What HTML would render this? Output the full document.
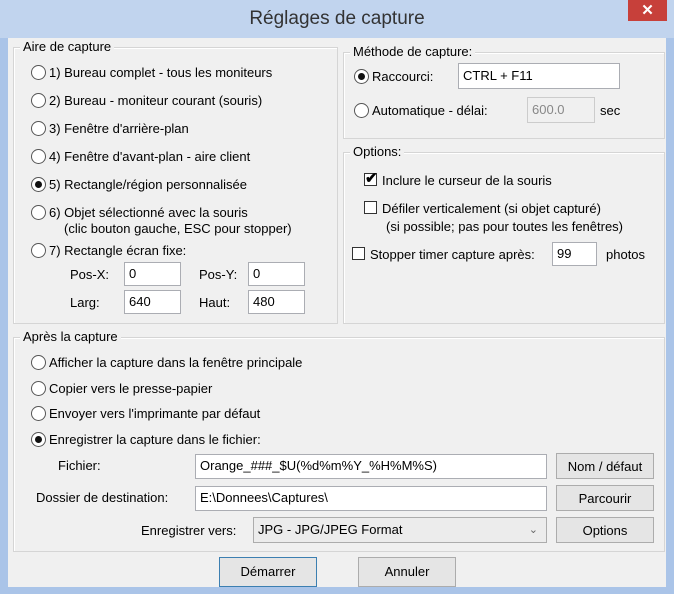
<!DOCTYPE html>
<html><head><meta charset="utf-8"><style>
body{margin:0;width:674px;height:594px;background:#aac4e8;font-family:"Liberation Sans",sans-serif;font-size:13px;color:#000;position:relative;overflow:hidden}
.a{position:absolute;white-space:nowrap}
#win{position:absolute;left:8px;top:38px;width:658px;height:549px;background:#f0f0f0}
#title{position:absolute;left:0;top:0;width:674px;height:38px;background:#c1d4ee;text-align:center;line-height:38px;font-size:19px;color:#333}
#close{position:absolute;left:628px;top:0;width:39px;height:21px;background:#c7403a;color:#fff;font-size:15px;text-align:center;line-height:21px;font-weight:bold}
.g{position:absolute;border:1px solid #d5d5d5;box-shadow:inset 1px 1px 0 #fff}
.gl{position:absolute;background:#f0f0f0;padding:0 3px;top:-9px;left:6px}
.r{position:absolute;width:15px;height:15px;margin:-1px 0 0 -1px;border:1px solid #555;border-radius:50%;background:#fff;box-sizing:border-box}
.r.on::after{content:"";position:absolute;left:3px;top:3px;width:7px;height:7px;border-radius:50%;background:#111}
.c{position:absolute;width:13px;height:13px;border:1px solid #333;background:#fff;box-sizing:border-box}
.i{position:absolute;background:#fff;border:1px solid #abadb3;box-sizing:border-box;padding-left:4px;line-height:22px}
.b{position:absolute;background:#e5e5e5;border:1px solid #acacac;box-sizing:border-box;text-align:center;line-height:26px}
</style></head><body>
<div id="title">Réglages de capture</div>
<div id="close">✕</div>
<div id="win"></div>

<div class="g" style="left:13px;top:47px;width:323px;height:275px"><span class="gl">Aire de capture</span></div>
<div class="r" style="left:32px;top:66px"></div><span class="a" style="left:49px;top:65px">1) Bureau complet - tous les moniteurs</span>
<div class="r" style="left:32px;top:94px"></div><span class="a" style="left:49px;top:93px">2) Bureau - moniteur courant (souris)</span>
<div class="r" style="left:32px;top:122px"></div><span class="a" style="left:49px;top:121px">3) Fenêtre d'arrière-plan</span>
<div class="r" style="left:32px;top:150px"></div><span class="a" style="left:49px;top:149px">4) Fenêtre d'avant-plan - aire client</span>
<div class="r on" style="left:32px;top:178px"></div><span class="a" style="left:49px;top:177px">5) Rectangle/région personnalisée</span>
<div class="r" style="left:32px;top:206px"></div><span class="a" style="left:49px;top:205px">6) Objet sélectionné avec la souris</span>
<span class="a" style="left:64px;top:221px">(clic bouton gauche, ESC pour stopper)</span>
<div class="r" style="left:32px;top:244px"></div><span class="a" style="left:49px;top:243px">7) Rectangle écran fixe:</span>
<span class="a" style="left:70px;top:267px">Pos-X:</span><div class="i" style="left:124px;top:262px;width:57px;height:24px">0</div>
<span class="a" style="left:199px;top:267px">Pos-Y:</span><div class="i" style="left:248px;top:262px;width:57px;height:24px">0</div>
<span class="a" style="left:70px;top:295px">Larg:</span><div class="i" style="left:124px;top:290px;width:57px;height:24px">640</div>
<span class="a" style="left:199px;top:295px">Haut:</span><div class="i" style="left:248px;top:290px;width:57px;height:24px">480</div>

<div class="g" style="left:343px;top:52px;width:320px;height:85px"><span class="gl">Méthode de capture:</span></div>
<div class="r on" style="left:355px;top:70px"></div><span class="a" style="left:372px;top:69px">Raccourci:</span>
<div class="i" style="left:458px;top:63px;width:162px;height:26px;line-height:24px">CTRL + F11</div>
<div class="r" style="left:355px;top:104px"></div><span class="a" style="left:372px;top:103px">Automatique - délai:</span>
<div class="i" style="left:527px;top:97px;width:68px;height:26px;line-height:24px;background:#f0f0f0;border-color:#ccc;color:#888">600.0</div>
<span class="a" style="left:600px;top:103px">sec</span>

<div class="g" style="left:343px;top:152px;width:320px;height:170px"><span class="gl">Options:</span></div>
<div class="c" style="left:364px;top:173px"></div><span class="a" style="left:365px;top:169px;font-size:15px;font-weight:bold">✔</span><span class="a" style="left:382px;top:173px">Inclure le curseur de la souris</span>
<div class="c" style="left:364px;top:201px"></div><span class="a" style="left:382px;top:201px">Défiler verticalement (si objet capturé)</span>
<span class="a" style="left:386px;top:219px">(si possible; pas pour toutes les fenêtres)</span>
<div class="c" style="left:352px;top:247px"></div><span class="a" style="left:370px;top:247px">Stopper timer capture après:</span>
<div class="i" style="left:552px;top:242px;width:45px;height:24px">99</div>
<span class="a" style="left:606px;top:247px">photos</span>

<div class="g" style="left:13px;top:337px;width:650px;height:213px"><span class="gl">Après la capture</span></div>
<div class="r" style="left:32px;top:356px"></div><span class="a" style="left:49px;top:355px">Afficher la capture dans la fenêtre principale</span>
<div class="r" style="left:32px;top:382px"></div><span class="a" style="left:49px;top:381px">Copier vers le presse-papier</span>
<div class="r" style="left:32px;top:407px"></div><span class="a" style="left:49px;top:406px">Envoyer vers l'imprimante par défaut</span>
<div class="r on" style="left:32px;top:433px"></div><span class="a" style="left:49px;top:432px">Enregistrer la capture dans le fichier:</span>
<span class="a" style="left:58px;top:458px">Fichier:</span>
<div class="i" style="left:195px;top:454px;width:352px;height:25px">Orange_###_$U(%d%m%Y_%H%M%S)</div>
<div class="b" style="left:556px;top:453px;width:98px;height:26px">Nom / défaut</div>
<span class="a" style="left:36px;top:490px">Dossier de destination:</span>
<div class="i" style="left:195px;top:486px;width:352px;height:25px">E:\Donnees\Captures\</div>
<div class="b" style="left:556px;top:485px;width:98px;height:26px">Parcourir</div>
<span class="a" style="left:141px;top:523px">Enregistrer vers:</span>
<div class="i" style="left:253px;top:517px;width:294px;height:26px;line-height:24px;background:#ececec;border-color:#acacac">JPG - JPG/JPEG Format<span style="position:absolute;right:8px;color:#666;font-size:11px">⌄</span></div>
<div class="b" style="left:556px;top:517px;width:98px;height:26px">Options</div>

<div class="b" style="left:219px;top:557px;width:98px;height:30px;line-height:28px;border:1px solid #3c7fb1">Démarrer</div>
<div class="b" style="left:358px;top:557px;width:98px;height:30px;line-height:28px">Annuler</div>
</body></html>
